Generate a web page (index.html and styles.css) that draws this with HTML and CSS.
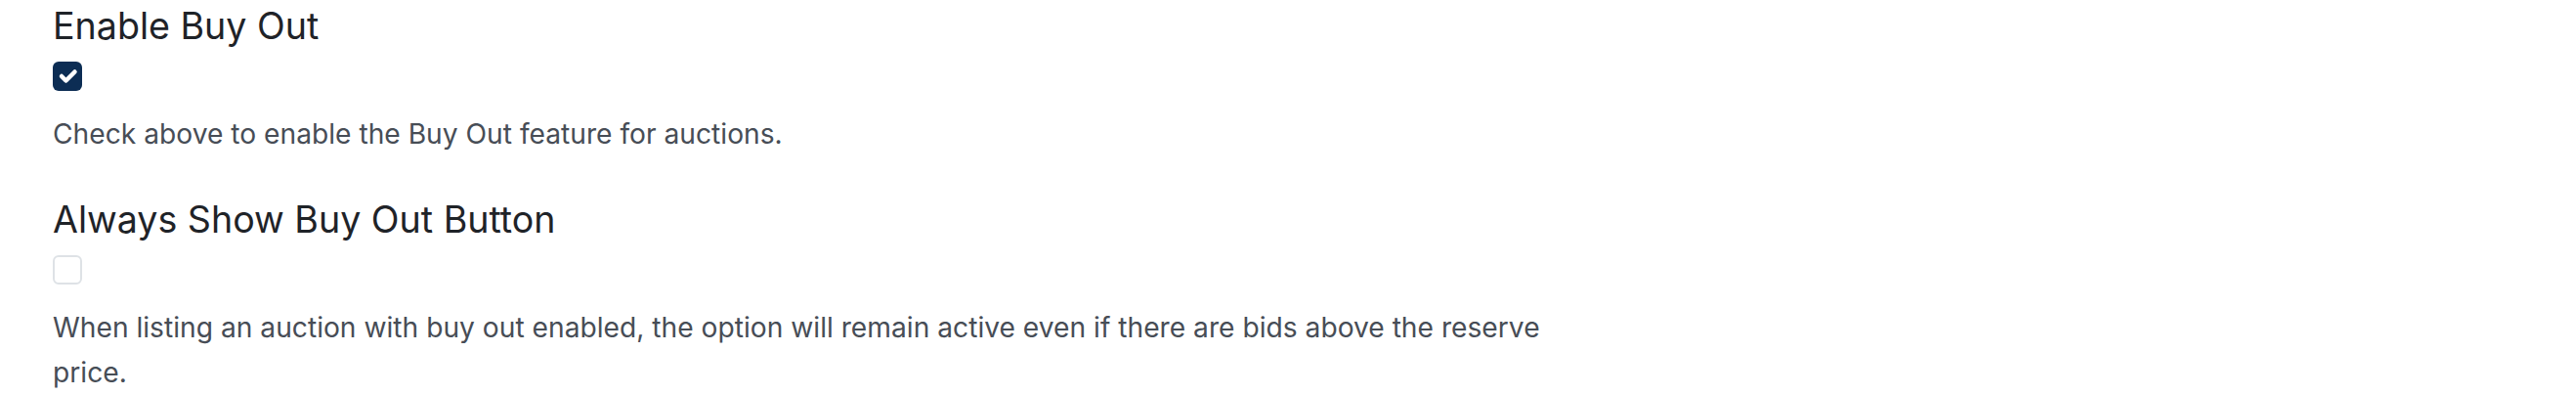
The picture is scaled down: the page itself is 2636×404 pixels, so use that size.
FILE: index.html
```html
<!DOCTYPE html>
<html>
<head>
<meta charset="utf-8">
<link rel="stylesheet" href="styles.css">
</head>
<body>
<div class="settings">
  <div class="field">
    <label class="field-label">Enable Buy Out</label>
    <div class="check-row"><span class="checkbox checked"><svg viewBox="0 0 20 20" width="30" height="30"><path d="M6 10 l3 3 l6 -6" fill="none" stroke="#fff" stroke-width="3" stroke-linecap="round" stroke-linejoin="round"/></svg></span></div>
    <p class="field-help">Check above to enable the Buy Out feature for auctions.</p>
  </div>
  <div class="field">
    <label class="field-label">Always Show Buy Out Button</label>
    <div class="check-row"><span class="checkbox"></span></div>
    <p class="field-help">When listing an auction with buy out enabled, the option will remain active even if there are bids above the reserve price.</p>
  </div>
</div>
</body>
</html>
```
FILE: styles.css
```css
html, body {
  margin: 0;
  padding: 0;
  background: #ffffff;
}
.settings {
  padding: 0 0 0 54px;
  display: flex;
  flex-direction: column;
  gap: 38px;
  font-family: "Inter", "Noto Sans", sans-serif;
}
.field {
  display: flex;
  flex-direction: column;
}
.field-label {
  display: block;
  font-size: 37.6px;
  line-height: 44px;
  color: #1f2328;
  padding-top: 5px;
}
.check-row {
  display: flex;
  padding-top: 14px;
}
.checkbox {
  width: 30px;
  height: 30px;
  box-sizing: border-box;
  border-radius: 6px;
  border: 2px solid #dee2e6;
  background: #fff;
  display: flex;
  align-items: center;
  justify-content: center;
  overflow: hidden;
}
.checkbox.checked {
  background: #0c2d54;
  border: none;
}
.field-help {
  margin: 0;
  padding-top: 21px;
  max-width: 1560px;
  font-size: 28.2px;
  line-height: 46px;
  color: #474d56;
}
```
